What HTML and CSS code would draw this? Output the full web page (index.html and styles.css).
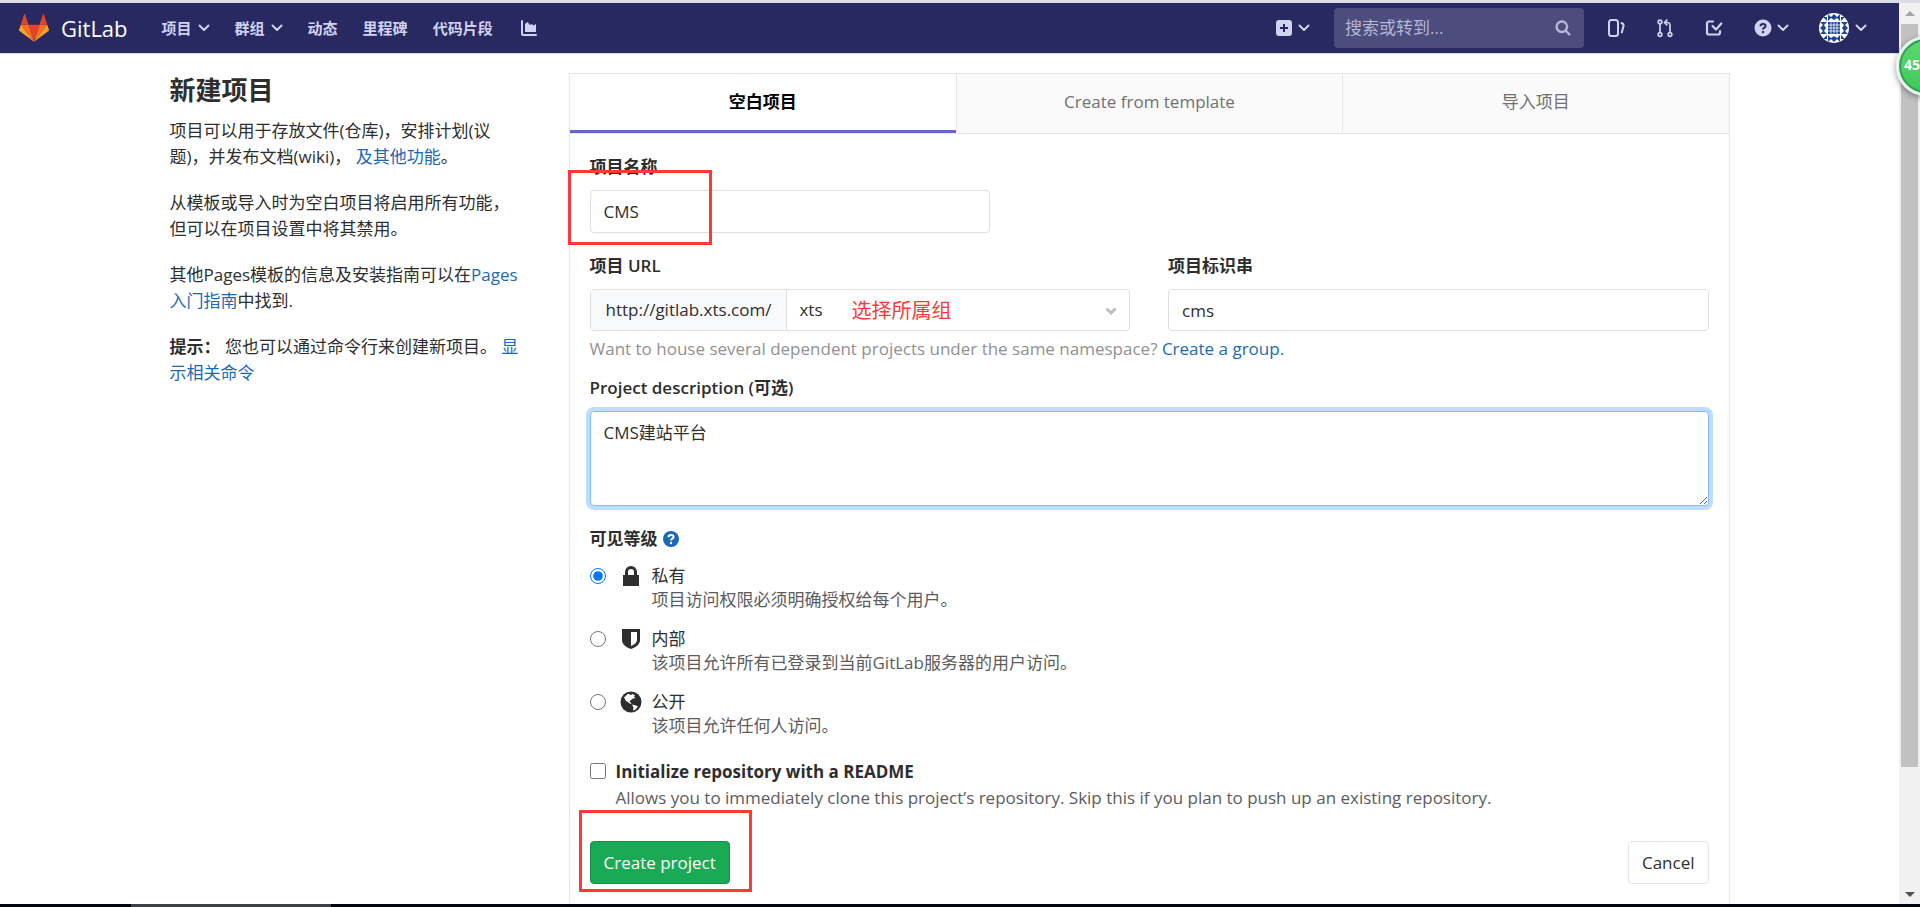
FILE: index.html
```html
<!DOCTYPE html>
<html lang="zh-CN">
<head>
<meta charset="utf-8">
<title>新建项目 · GitLab</title>
<link rel="stylesheet" href="styles.css">
</head>
<body>
<svg class="defs" aria-hidden="true">
  <symbol id="chevron" viewBox="0 0 12 8"><path d="M1.5 1.5 6 6l4.500-4.500" fill="none" stroke="currentColor" stroke-width="2" stroke-linecap="round" stroke-linejoin="round"/></symbol>
</svg>
<div class="window">
  <div class="page">
    <header class="navbar">
      <a class="brand" href="#">
        <svg class="brand-logo" viewBox="0 0 36 36" aria-hidden="true">
          <path fill="#e24329" d="M18 34.400 24.600 14H11.400z"/>
          <path fill="#fc6d26" d="M18 34.400 11.400 14H2.100z"/>
          <path fill="#fca326" d="M2.100 14 .1 20.200a1.400 1.400 0 0 0 .5 1.500L18 34.400z"/>
          <path fill="#e24329" d="M2.100 14h9.300l-4-12.300a.7.7 0 0 0-1.300 0z"/>
          <path fill="#fc6d26" d="M18 34.400 24.600 14h9.300z"/>
          <path fill="#fca326" d="m33.900 14 2 6.200a1.400 1.400 0 0 1-.5 1.500L18 34.400z"/>
          <path fill="#e24329" d="M33.900 14h-9.300l4-12.300a.7.7 0 0 1 1.300 0z"/>
        </svg>
        <span>GitLab</span>
      </a>
      <nav class="nav-links">
        <a class="drop" href="#">项目 <svg class="chev"><use href="#chevron"/></svg></a>
        <a class="drop" href="#">群组 <svg class="chev"><use href="#chevron"/></svg></a>
        <a href="#">动态</a>
        <a href="#">里程碑</a>
        <a href="#">代码片段</a>
        <a class="nav-chart" href="#" aria-label="图表"><svg viewBox="0 0 16 16" class="ico"><path fill="currentColor" d="M1 0a1 1 0 0 1 1 1v12.500a.5.5 0 0 0 .5.5H15a1 1 0 0 1 0 2H2a2 2 0 0 1-2-2V1a1 1 0 0 1 1-1zM4 12V4l2.500-2L9 5l1.500-1 2 1.500L15 4v8z"/></svg></a>
      </nav>
      <div class="nav-tools">
        <a class="drop" href="#" aria-label="新建"><svg viewBox="0 0 16 16" class="ico"><path fill="currentColor" fill-rule="evenodd" d="M3 0h10a3 3 0 0 1 3 3v10a3 3 0 0 1-3 3H3a3 3 0 0 1-3-3V3a3 3 0 0 1 3-3zm4 7H4v2h3v3h2V9h3V7H9V4H7z"/></svg><svg class="chev"><use href="#chevron"/></svg></a>
        <div class="search">
          <input type="search" aria-label="搜索" placeholder="搜索或转到...">
          <svg viewBox="0 0 16 16" class="ico"><path fill="none" stroke="currentColor" stroke-width="2.400" stroke-linecap="round" d="M6.800 1.500a5.200 5.200 0 1 1 0 10.500A5.200 5.200 0 0 1 6.800 1.500zM11 11l3.500 3.500"/></svg>
        </div>
        <a class="tool" href="#" aria-label="议题"><svg viewBox="0 0 16 16" class="ico"><g fill="none" stroke="currentColor" stroke-width="2" stroke-linecap="round"><rect x="1" y="0" width="9" height="16" rx="2.500"/><path d="M13.500 3c2 .6 2.300 1.500 2 3l-1.700 6.500"/></g></svg></a>
        <a class="tool" href="#" aria-label="合并请求"><svg viewBox="0 0 16 16" class="ico"><g fill="none" stroke="currentColor" stroke-width="1.700"><circle cx="3" cy="2" r="1.800"/><circle cx="3" cy="14.500" r="1.800"/><circle cx="13" cy="14.500" r="1.800"/><path d="M3 4v8.500M13 12.500V5a2.500 2.500 0 0 0-2.500-2.500H8M10.300-.5l-2.800 3 2.800 2.800"/></g></svg></a>
        <a class="tool" href="#" aria-label="待办事项"><svg viewBox="0 0 16 16" class="ico"><g fill="none" stroke="currentColor" stroke-width="2.200" stroke-linecap="round" stroke-linejoin="round"><path d="M7 1.500H3A2 2 0 0 0 1 3.500v9a2 2 0 0 0 2 2h9a2 2 0 0 0 2-2V11"/><path d="m6.500 6 3.500 3.500L15.300 3.500"/></g></svg></a>
        <a class="drop help" href="#" aria-label="帮助"><svg viewBox="0 0 16 16" class="ico"><circle cx="8" cy="8" r="8.500" fill="currentColor"/><path class="cut" d="M5.500 6.200C5.500 4.800 6.600 4 8 4s2.600.8 2.600 2.100C10.600 7.700 8 7.600 8 9.500" fill="none" stroke-width="2"/><circle class="cut-dot" cx="8" cy="12" r="1.200"/></svg><svg class="chev"><use href="#chevron"/></svg></a>
        <a class="drop user" href="#" aria-label="用户"><svg class="avatar" viewBox="0 0 30 30"><defs><clipPath id="round"><circle cx="15" cy="15" r="15"/></clipPath></defs><g clip-path="url(#round)"><rect width="30" height="30" fill="#fff"/><path fill="#1f4396" d="M9 9h12v12H9zM9 1l3 3 3-3v6l-3-2-3 3zM21 1l-3 3-3-3v6l3-2 3 3zM9 29l3-3 3 3v-6l-3 2-3-3zM21 29l-3-3-3 3v-6l3 2 3-3zM1 9l3 3-3 3h6l-2-3 3-3zM1 21l3-3-3-3h6l-2 3 3 3zM29 9l-3 3 3 3h-6l2-3-3-3zM29 21l-3-3 3-3h-6l2 3-3 3zM4 4h4v4zM26 4h-4v4zM4 26h4v-4zM26 26h-4v-4z"/><path d="M9 12h12M9 15h12M9 18h12M12 9v12M15 9v12M18 9v12" stroke="#fff" stroke-width=".8"/></g></svg><svg class="chev"><use href="#chevron"/></svg></a>
      </div>
    </header>

    <main class="container">
      <aside class="intro">
        <h1>新建项目</h1>
        <p>项目可以用于存放文件(仓库)，安排计划(议题)，并发布文档(wiki)， <a href="#">及其他功能</a>。</p>
        <p>从模板或导入时为空白项目将启用所有功能，但可以在项目设置中将其禁用。</p>
        <p>其他Pages模板的信息及安装指南可以在<a href="#">Pages入门指南</a>中找到.</p>
        <p><strong>提示：</strong> 您也可以通过命令行来创建新项目。 <a href="#">显示相关命令</a></p>
      </aside>

      <section class="panel">
        <div class="tabs" role="tablist">
          <button class="tab active" type="button" role="tab" aria-selected="true">空白项目</button>
          <button class="tab" type="button" role="tab" aria-selected="false">Create from template</button>
          <button class="tab" type="button" role="tab" aria-selected="false">导入项目</button>
        </div>
        <form class="form">
          <div class="field name-field">
            <label for="name">项目名称</label>
            <input class="control" id="name" type="text" value="CMS">
            <span class="mark mark-name"></span>
          </div>
          <div class="row">
            <div class="field">
              <label for="namespace">项目 URL</label>
              <div class="group">
                <span class="prefix">http://gitlab.xts.com/</span>
                <div class="select-wrap">
                  <select id="namespace"><option>xts</option></select>
                  <svg class="select-arrow" viewBox="0 0 12 8"><path d="M1.500 1.500 6 6l4.500-4.500" fill="none" stroke="currentColor" stroke-width="3"/></svg>
                  <span class="note">选择所属组</span>
                </div>
              </div>
            </div>
            <div class="field">
              <label for="slug">项目标识串</label>
              <input class="control" id="slug" type="text" value="cms">
            </div>
          </div>
          <p class="hint">Want to house several dependent projects under the same namespace? <a href="#">Create a group.</a></p>
          <div class="field">
            <label for="description">Project description (可选)</label>
            <textarea class="control area" id="description">CMS建站平台</textarea>
          </div>
          <fieldset class="levels">
            <legend>可见等级 <a href="#" aria-label="帮助"><svg viewBox="0 0 16 16" class="ico"><circle cx="8" cy="8" r="8" fill="currentColor"/><path d="M5.500 6.200C5.500 4.800 6.600 4 8 4s2.600.8 2.600 2.100C10.600 7.700 8 7.600 8 9.500" fill="none" stroke="#fff" stroke-width="2"/><circle cx="8" cy="12" r="1.200" fill="#fff"/></svg></a></legend>
            <div class="level">
              <input type="radio" name="level" id="private" checked>
              <svg viewBox="0 0 20 20" class="level-icon"><path fill="currentColor" fill-rule="evenodd" d="M2 9h2V6a6 6 0 0 1 12 0v3h2v11H2zm5 0h6V6a3 3 0 0 0-6 0z"/></svg>
              <label for="private">私有<small>项目访问权限必须明确授权给每个用户。</small></label>
            </div>
            <div class="level">
              <input type="radio" name="level" id="internal">
              <svg viewBox="0 0 20 20" class="level-icon"><path fill="currentColor" fill-rule="evenodd" d="M1 0h18v11c0 4-4 7.500-9 9-5-1.500-9-5-9-9zm9 3v14c3.500-1.500 6-3.500 6-6V3z"/></svg>
              <label for="internal">内部<small>该项目允许所有已登录到当前GitLab服务器的用户访问。</small></label>
            </div>
            <div class="level">
              <input type="radio" name="level" id="public">
              <svg viewBox="0 0 20 20" class="level-icon"><circle cx="10" cy="10" r="10.500" fill="currentColor"/><path fill="#fff" d="M7 1.800 10 3l2-1 2 1.500-1 1 1.500 1.500-2.500.5L10 8 8.500 9.500l2 2-1 .5-2-1.500L5 9 3 5.500zM11 12.500l4 1 2 1-3 3.500-2 .5.500-3z"/></svg>
              <label for="public">公开<small>该项目允许任何人访问。</small></label>
            </div>
          </fieldset>
          <div class="readme">
            <input type="checkbox" id="readme">
            <label for="readme">Initialize repository with a README</label>
            <p>Allows you to immediately clone this project’s repository. Skip this if you plan to push up an existing repository.</p>
          </div>
          <div class="actions">
            <button class="btn primary" type="submit">Create project</button>
            <button class="btn" type="button">Cancel</button>
            <span class="mark mark-create"></span>
          </div>
        </form>
      </section>
    </main>
  </div>
  <div class="scrollbar" aria-hidden="true">
    <span class="arrow up"></span>
    <span class="thumb"></span>
    <span class="arrow down"></span>
  </div>
</div>
<div class="taskbar"><span></span></div>
<div class="bubble"><span>45</span></div>
</body>
</html>
```
FILE: styles.css
```css
* { box-sizing: border-box; }
body {
  margin: 0;
  min-height: 100vh;
  display: flex;
  flex-direction: column;
  position: relative;
  overflow-x: hidden;
  background: #fff;
  color: #2e2e2e;
  font: 17px/26px "Open Sans", "Noto Sans CJK SC", sans-serif;
}
input, button, select, textarea { font: inherit; color: inherit; }
a { color: #1b69b6; text-decoration: none; }
.defs { position: absolute; width: 0; height: 0; }
.window {
  flex: 1;
  display: flex;
  border-top: 3px solid #dcdce4;
}
.page {
  flex: 1;
  display: flex;
  flex-direction: column;
}

/* Top bar */
.navbar {
  display: flex;
  align-items: center;
  height: 51px;
  padding: 0 32px 0 19px;
  background: #292961;
  border-bottom: 1px solid #dcdce4;
  color: #d1d1f0;
}
.navbar a { color: inherit; }
.brand {
  display: flex;
  align-items: center;
  gap: 12px;
  font-size: 22px;
}
.navbar .brand { color: #fff; }
.brand-logo { width: 30px; height: 30px; }
.nav-links {
  display: flex;
  align-items: center;
  gap: 25px;
  margin-left: 34px;
  font-size: 15px;
  font-weight: 700;
}
.nav-chart { margin-left: 3px; }
.drop { display: flex; align-items: center; gap: 6px; }
.chev { width: 12px; height: 8px; }
.ico { width: 16px; height: 16px; display: block; overflow: visible; }
.nav-tools {
  display: flex;
  align-items: center;
  margin-left: auto;
}
.search {
  display: flex;
  align-items: center;
  width: 250px;
  height: 40px;
  margin: 0 24px;
  padding: 0 13px 0 11px;
  border-radius: 4px;
  background: #4c4c7d;
  color: #b6b6d6;
}
.search input {
  flex: 1;
  min-width: 0;
  padding: 0;
  border: 0;
  outline: 0;
  background: none;
}
.search input::placeholder { color: #b6b6d6; }
.tool { margin-right: 33px; }
.cut { stroke: #292961; }
.cut-dot { fill: #292961; }
.user { margin-left: 30px; }
.avatar { width: 30px; height: 30px; }

/* Page body */
.container {
  flex: 1;
  display: grid;
  grid-template-columns: 359px 1fr;
  gap: 40px;
  width: 100%;
  max-width: 1600px;
  margin: 0 auto;
  padding: 19px 20px 0;
}
.intro { padding-right: 4px; }
.intro h1 {
  margin: 0 0 11px;
  font-size: 26px;
  line-height: 34px;
}
.intro p { margin: 0 0 20px; }
.panel {
  display: flex;
  flex-direction: column;
  border: 1px solid #e5e5e5;
  border-bottom: 0;
}
.tabs {
  display: grid;
  grid-template-columns: repeat(3, 1fr);
  border-bottom: 1px solid #e5e5e5;
}
.tab {
  height: 59px;
  border: 0;
  border-left: 1px solid #e5e5e5;
  border-bottom: 3px solid #fafafa;
  background: #fafafa;
  color: #707070;
}
.tab.active {
  border-left: 0;
  border-bottom-color: #6666c4;
  background: #fff;
  color: #000;
  font-weight: 700;
}
.form { padding: 20px 20px 19px; }
.field > label, .levels legend {
  display: block;
  margin-bottom: 10px;
  font-weight: 600;
}
.field { position: relative; margin-bottom: 20px; }
.name-field .control { width: 400px; height: 43px; }
.control {
  display: block;
  width: 100%;
  height: 42px;
  padding: 8px 13px;
  border: 1px solid #dfdfdf;
  border-radius: 4px;
  background: #fff;
}
.row {
  display: grid;
  grid-template-columns: 1fr 1fr;
  gap: 38px;
}
.row .field { margin-bottom: 5px; }
.group {
  display: flex;
  height: 42px;
  border: 1px solid #dfdfdf;
  border-radius: 4px;
}
.prefix {
  display: flex;
  align-items: center;
  padding: 0 15px;
  border-right: 1px solid #dfdfdf;
  background: #f8f9fb;
}
.select-wrap { position: relative; flex: 1; display: flex; }
.select-wrap select {
  flex: 1;
  padding: 0 12px;
  border: 0;
  background: none;
  appearance: none;
}
.select-arrow {
  position: absolute;
  top: 17px;
  right: 12px;
  width: 12px;
  height: 8px;
  color: #bfbfbf;
}
.note {
  position: absolute;
  top: 8px;
  left: 64px;
  color: #ff3838;
  font-size: 20px;
}
.hint { margin: 0 0 13px; color: #919191; }
.area {
  height: 95px;
  border-color: #80bdff;
  box-shadow: 0 0 0 4px #bfdeff;
}

/* Visibility */
.levels { margin: 0; padding: 0; border: 0; }
.levels legend {
  display: flex;
  align-items: center;
  gap: 5px;
  margin-bottom: 12px;
  padding: 0;
}
.level {
  display: flex;
  gap: 15px;
  margin-bottom: 15px;
}
.level input, .readme input { width: 16px; height: 16px; margin: 4px 0; }
.level-icon { width: 20px; height: 20px; margin: 2px -4px 0 0; overflow: visible; }
.level label { line-height: 24px; }
.level small { display: block; color: #5c5c5c; font-size: 17px; }
.readme {
  display: grid;
  grid-template-columns: 16px 1fr;
  column-gap: 10px;
  margin-top: 20px;
}
.levels + .readme { margin-top: 6px; }
.readme label { font-weight: 700; }
.readme p { grid-column: 2; margin: 0; color: #5c5c5c; }
.actions {
  position: relative;
  display: flex;
  justify-content: space-between;
  margin-top: 30px;
}
.btn {
  height: 43px;
  padding: 0 13px;
  border: 1px solid #e5e5e5;
  border-radius: 4px;
  background: #fff;
}
.btn.primary { border-color: #168f48; background: #1aaa55; color: #fff; }

/* Red highlight frames */
.mark {
  position: absolute;
  border: 3px solid #ff3838;
  pointer-events: none;
}
.mark-name { left: -22px; top: 16px; width: 144px; height: 75px; }
.mark-create { left: -11px; top: -31px; width: 173px; height: 82px; }

/* Window edges */
.scrollbar {
  display: flex;
  flex-direction: column;
  align-items: center;
  width: 21px;
  padding: 8px 0 7px;
  background: #f1f1f1;
}
.thumb { width: 17px; height: 743px; margin: 8px 0 auto; background: #c1c1c1; }
.arrow { border: 5px solid transparent; }
.up { border-top: 0; border-bottom-color: #a3a3a3; }
.down { border-bottom: 0; border-top-color: #505050; }
.taskbar { height: 3px; padding-left: 131px; background: #02040f; }
.taskbar span { display: block; width: 200px; height: 3px; background: #3c3f45; }
.bubble {
  position: absolute;
  top: 36px;
  right: -36px;
  width: 60px;
  height: 60px;
  border: 3px solid #e8f3ea;
  border-radius: 50%;
  background: linear-gradient(#5fd870, #3fc85a);
  box-shadow: inset 0 0 0 2px #2f9e55, 0 2px 6px #0006;
  color: #fff;
  font-size: 14px;
  font-weight: 700;
}
.bubble span { position: absolute; left: 5px; top: 13px; }
```
